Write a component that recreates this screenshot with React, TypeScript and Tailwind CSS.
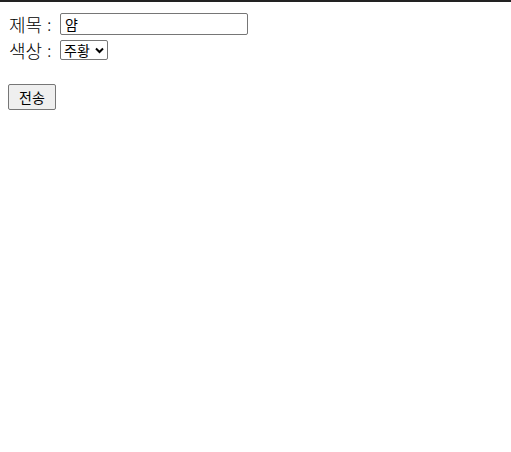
export default function App() {
  return (
    <div className="min-h-screen bg-white border-t-2 border-[#222] font-['Noto_Sans_CJK_KR','Noto_Sans',sans-serif] text-black">
      <form className="flex flex-col items-start px-2 pt-[11px]" onSubmit={(e) => e.preventDefault()}>
        {/* 제목 */}
        <div className="flex items-center h-[22px] text-[18px] font-light">
          <span className="w-[52px] pl-[1px] flex items-center">
            제목<span className="ml-[5px] text-[16px]">:</span>
          </span>
          <input
            type="text"
            defaultValue="얌"
            className="w-[188px] h-[22px] border border-[#767676] rounded-[2px] px-[4px] text-[14px] outline-none font-normal"
          />
        </div>
        {/* 색상 */}
        <div className="flex items-center h-[20px] mt-[5px] text-[18px] font-light">
          <span className="w-[52px] pl-[1px] flex items-center">
            색상<span className="ml-[5px] text-[16px]">:</span>
          </span>
          <div className="relative w-[48px] h-[20px] border border-[#767676] rounded-[2px] flex items-center pl-[3px] text-[14px] font-normal">
            <span className="leading-none">주황</span>
            <svg className="absolute right-[3px] top-[6px]" width="9" height="7" viewBox="0 0 9 7">
              <path d="M1 1.5 L4.5 5 L8 1.5" fill="none" stroke="#000" strokeWidth="2" />
            </svg>
          </div>
        </div>
        <button
          type="submit"
          className="mt-[24px] w-[48px] h-[26px] bg-[#efefef] border border-[#767676] rounded-[2px] text-[14px] font-normal flex items-center justify-center"
        >
          전송
        </button>
      </form>
    </div>
  );
}
